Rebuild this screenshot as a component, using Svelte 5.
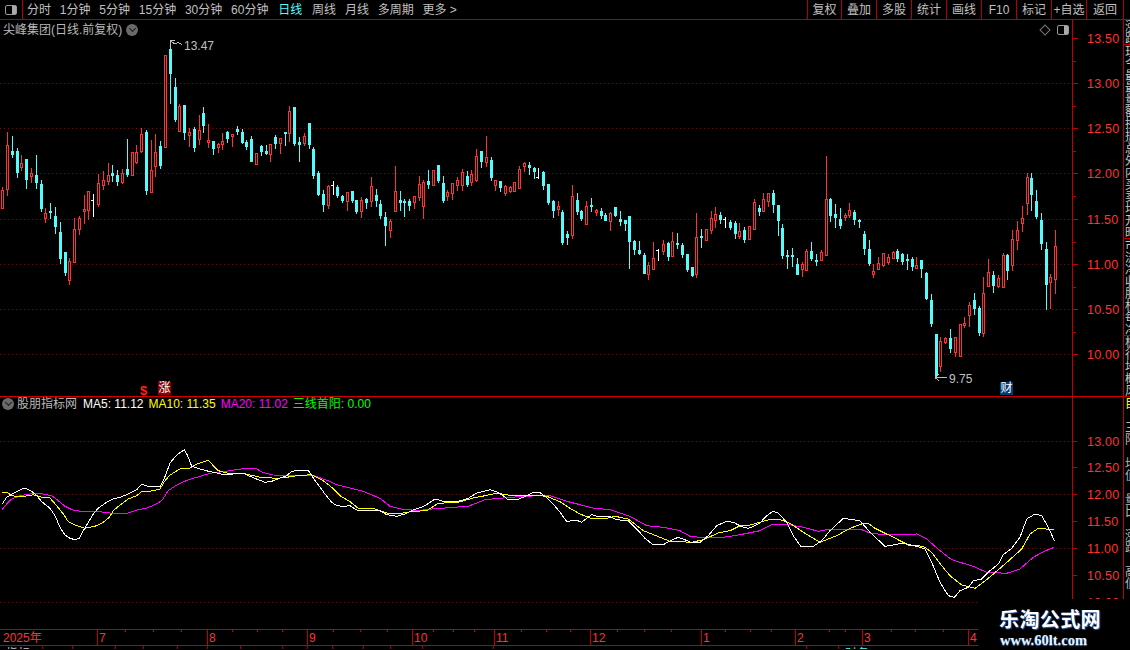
<script>
  const periods = [
    { label: "分时" }, { label: "1分钟" }, { label: "5分钟" }, { label: "15分钟" },
    { label: "30分钟" }, { label: "60分钟" }, { label: "日线", active: true },
    { label: "周线" }, { label: "月线" }, { label: "多周期" }, { label: "更多 >" },
  ];
  const actions = ["复权", "叠加", "多股", "统计", "画线", "F10", "标记", "+自选", "返回"];

  // type, high, body top, body bottom, low (screen y, read off the chart)
  const bars = [
    ["r",187,190,208,208],["r",132,145,189,195],["c",136,151,154,157],["c",148,151,172,177],["r",155,163,167,170],
    ["c",159,159,179,188],["r",168,173,176,182],["c",155,175,182,188],["c",180,184,208,211],["r",208,213,218,222],
    ["c",203,211,212,218],["c",207,216,226,233],["c",222,232,258,263],["c",252,252,272,275],["r",258,261,280,284],
    ["r",218,229,262,262],["r",216,218,229,234],["r",195,209,211,223],["r",191,191,210,219],["w",194,200,201,216],
    ["r",174,183,204,206],["r",171,180,185,189],["r",163,175,181,184],["c",165,173,175,181],["c",170,175,181,185],
    ["r",169,173,182,183],["c",139,169,174,176],["r",152,152,175,175],["r",145,152,162,163],["r",128,134,151,152],
    ["c",130,132,190,194],["r",140,170,192,192],["r",134,152,166,176],["c",141,146,165,168],["r",55,55,147,147],
    ["c",40,49,73,103],["c",78,87,119,121],["r",104,106,131,131],["c",105,105,132,139],["r",128,132,135,146],
    ["c",127,129,147,151],["r",115,130,139,144],["c",107,113,125,132],["r",124,140,142,147],["c",141,141,148,154],
    ["r",143,144,147,152],["r",133,141,144,149],["c",131,132,138,142],["r",134,134,136,146],["c",126,129,131,134],
    ["c",129,132,142,143],["c",140,142,146,149],["c",136,139,161,161],["r",153,153,164,164],["c",145,146,151,155],
    ["c",145,151,153,154],["r",144,144,154,161],["c",135,137,143,148],["r",138,138,143,153],["c",132,132,133,145],
    ["r",106,111,133,141],["c",107,107,143,145],["c",137,142,144,161],["r",133,136,143,145],["c",123,123,144,148],
    ["c",147,149,175,178],["c",171,173,194,195],["c",190,194,204,211],["r",185,186,205,208],["w",181,185,186,194],
    ["c",185,187,195,197],["c",195,196,200,202],["r",192,192,201,210],["c",191,191,200,202],["c",200,200,211,213],
    ["r",197,200,211,217],["c",198,199,202,208],["r",177,186,201,206],["c",189,195,200,206],["c",200,204,215,218],
    ["c",212,217,225,245],["r",219,221,230,237],["r",166,191,211,211],["c",191,200,202,210],["c",199,201,202,216],
    ["c",199,201,205,210],["r",196,196,202,208],["r",176,184,197,200],["r",180,182,206,218],["c",170,181,184,188],
    ["r",170,170,185,185],["c",165,165,180,182],["c",176,183,200,202],["r",190,192,196,200],["r",183,183,193,199],
    ["r",177,180,185,190],["r",169,172,185,190],["c",171,176,184,186],["r",170,174,182,185],["r",149,156,180,181],
    ["c",151,151,161,167],["r",136,157,162,166],["c",157,160,177,180],["r",180,180,185,190],["c",181,181,187,191],
    ["r",185,186,193,195],["r",186,187,191,192],["r",182,182,191,191],["r",166,169,188,188],["r",162,163,166,171],
    ["c",162,165,167,174],["c",167,168,171,178],["w",168,177,178,178],["c",171,172,185,189],["c",184,184,202,204],
    ["c",200,201,210,217],["r",201,206,209,215],["c",210,212,242,244],["c",231,234,237,244],["r",185,196,235,238],
    ["c",193,200,211,214],["c",210,211,218,220],["r",201,206,224,224],["c",198,205,206,211],["r",209,210,212,215],
    ["c",208,211,215,218],["c",213,215,220,220],["r",212,213,221,230],["c",207,207,215,216],["c",211,219,221,225],
    ["c",220,220,223,230],["c",216,216,241,268],["c",240,241,249,254],["c",241,250,253,254],["c",253,255,273,273],
    ["r",262,265,274,279],["r",242,258,269,269],["w",249,250,251,260],["r",240,244,251,254],["c",242,243,256,260],
    ["r",232,241,256,256],["c",233,243,244,248],["c",243,245,254,257],["c",254,254,269,271],["c",267,267,275,276],
    ["r",213,237,274,277],["c",229,236,237,247],["r",229,229,240,240],["r",211,218,230,233],["r",207,214,220,227],
    ["c",212,215,219,223],["w",217,219,220,227],["c",220,222,227,229],["c",221,223,233,238],["r",223,231,236,238],
    ["c",227,230,239,242],["r",226,226,239,239],["r",199,202,229,229],["c",205,208,211,215],["r",193,199,211,211],
    ["r",193,193,201,206],["c",190,193,204,212],["c",205,205,220,235],["c",224,228,255,258],["c",250,255,256,268],
    ["c",248,255,256,266],["c",258,264,274,274],["r",262,264,269,276],["r",249,251,270,270],["c",242,251,258,260],
    ["c",254,260,261,265],["r",250,252,260,260],["r",156,199,255,255],["c",198,199,215,221],["c",204,214,217,227],
    ["c",208,219,225,228],["r",213,215,217,220],["r",203,210,215,217],["c",210,212,219,224],["c",219,220,221,227],
    ["c",231,234,248,254],["c",240,249,263,265],["r",264,271,274,277],["r",257,263,269,269],["r",253,253,265,266],
    ["r",254,257,262,264],["r",251,252,258,258],["c",249,251,258,261],["c",253,254,261,264],["c",254,259,260,269],
    ["c",257,259,266,270],["r",257,265,268,268],["c",260,260,268,277],["c",272,273,298,299],["c",294,300,323,326],
    ["c",334,334,375,378],["r",337,341,366,371],["r",337,338,342,343],["c",329,338,348,352],["r",337,337,352,356],
    ["r",324,324,356,356],["r",317,323,325,327],["r",302,305,315,326],["c",293,300,308,314],["c",306,308,332,335],
    ["r",277,293,333,336],["r",259,272,286,286],["c",271,275,285,292],["r",275,278,286,287],["r",253,255,287,287],
    ["c",254,255,270,279],["r",230,239,265,270],["r",221,230,240,249],["r",206,218,223,231],["r",173,177,203,214],
    ["c",173,178,194,210],["c",190,201,216,218],["c",213,220,243,249],["c",242,249,284,309],["r",274,277,282,308],
    ["r",230,246,279,293],
  ];
  const candles = bars.map(([type, hi, top, bot, lo], i) => ({
    type, hi, top, bot, lo, x: Math.round(2.33 + 4.786 * i),
  }));

  const priceTicks = [13.5, 13, 12.5, 12, 11.5, 11, 10.5, 10].map((v, i) => ({
    label: v.toFixed(2), y: Math.round(37.5 + 45.25 * i),
  }));
  const minorTicks = priceTicks.slice(0, 7).map((t) => t.y + 23);

  const indTicks = [13, 12.5, 12, 11.5, 11, 10.5, 10].map((v, i) => ({
    label: v.toFixed(2), y: Math.round(441.5 + 26.9 * i), grid: i % 2 === 0,
  }));

  // averages, traced in pieces at 3x
  const trace = (pieces) =>
    pieces
      .map(([x0, y0, p]) => {
        const out = [];
        for (let i = 0; i < p.length; i += 2) out.push(`${(x0 + p[i] / 3).toFixed(1)},${(y0 + p[i + 1] / 3).toFixed(1)}`);
        return out.join(" ");
      })
      .join(" ");

  const ma5 = trace([
    [0, 450, [6,166,20,145,35,136,50,128,65,120,78,118,95,127,110,140,125,158,150,178,165,200,180,235,195,258,210,268,225,272,238,268,250,245,265,220,280,195,295,177,320,160,340,150,360,145,385,135,410,122,425,106,440,111,480,113,490,95,500,70,510,42,530,18,553,2,562,18,575,52,600,60,630,68,650,72,675,78,700,75,730,73,750,82,775,92,795,100,815,97,840,87,860,80,875,67,900,64,925,64,935,80,955,108,975,135,995,160,1010,170,1030,172,1050,170,1070,183,1140,185]],
    [380, 470, [20,137,50,142,75,135,100,122,130,113,150,100,165,90,190,97,235,97,265,88,290,72,330,62,350,68,370,80,385,93,410,92,430,85,455,72,480,71,495,82,520,105,540,130,560,157,590,154,605,160,620,148,635,137,650,142,690,143,710,152,745,155,770,180,795,208,820,228,850,227,875,213,895,205,915,212,935,222,960,220,985,200,1010,170,1040,157,1060,160,1085,173,1105,178,1125,170,1140,162]],
    [760, 490, [15,85,38,67,55,72,80,100,100,140,122,172,160,172,185,155,210,125,250,88,300,95,330,130,375,172,400,168,430,162,470,172,495,180,515,220,540,280,565,320,583,325,600,305,625,295,640,275,665,270,690,245,715,225,730,197,755,178,780,145,800,90,825,75,845,80,865,115,883,155]],
  ]);
  const ma10 = trace([
    [0, 450, [6,130,22,130,35,140,60,143,85,140,100,137,125,145,150,147,170,170,190,195,205,218,225,228,255,238,285,232,310,220,328,205,340,185,360,168,385,150,410,140,425,128,450,127,480,120,495,95,510,78,540,60,570,57,590,45,625,34,640,50,655,65,680,72,730,73,780,85,830,88,860,85,890,80,935,77,965,92,995,115,1020,140,1050,158,1075,178,1100,178,1125,180,1140,185]],
    [380, 470, [25,133,65,133,100,127,140,125,175,103,235,100,280,87,315,80,350,73,385,78,450,78,500,82,540,98,570,118,600,135,630,147,670,150,705,142,745,150,790,185,840,205,870,217,900,218,935,220,970,212,1015,192,1050,185,1085,168,1110,168,1140,160]],
    [760, 490, [30,91,60,92,90,103,130,130,180,160,230,140,270,118,310,103,325,103,345,118,400,145,445,168,490,172,515,190,545,230,570,260,605,288,645,298,680,272,735,225,785,180,810,135,835,118,883,122]],
  ]);
  const ma20 = trace([
    [0, 450, [6,182,20,165,35,150,60,140,90,135,125,134,155,140,175,155,195,172,220,184,245,187,290,187,330,192,385,192,415,182,440,177,465,167,485,155,505,125,530,108,565,92,590,85,630,73,690,65,735,58,770,60,790,71,820,78,860,80,935,78,985,95,1010,107,1050,117,1090,127,1140,148]],
    [380, 470, [30,112,70,122,120,124,165,119,265,112,315,92,390,85,470,80,510,80,560,97,640,117,690,122,750,142,800,170,850,175,900,185,930,202,960,205,1030,205,1080,197,1140,185]],
    [760, 490, [40,105,75,105,130,115,175,127,210,120,300,120,330,132,370,137,470,135,500,150,540,185,575,212,640,232,680,250,740,253,780,240,820,205,850,188,883,175]],
  ]);

  const months = [
    { x: 97, label: "7" }, { x: 207, label: "8" }, { x: 307, label: "9" }, { x: 412, label: "10" },
    { x: 494, label: "11" }, { x: 590, label: "12" }, { x: 701, label: "1" }, { x: 795, label: "2" },
    { x: 862, label: "3" }, { x: 968, label: "4" },
  ];
  const dayTicks = [125,153,181,232,257,282,333,360,387,433,453,474,521,546,570,617,644,671,725,750,771,829,845,891,915,943];

  const tabs = [
    { w: 43, label: "指标" }, { w: 30, label: "" }, { w: 43, label: "" }, { w: 28, label: "" },
    { w: 34, label: "" }, { w: 30, label: "" }, { w: 33, label: "" }, { w: 42, label: "" },
    { w: 25, label: "" }, { w: 25, label: "" }, { w: 31, label: "" }, { w: 27, label: "" },
    { w: 32, label: "" }, { w: 71, label: "" }, { w: 313, label: "" }, { w: 32, label: "" },
    { w: 100, label: "财务", cyan: true },
  ];

  const sideGroups = [
    { h: 25, rows: ["涨", "跌"] },
    { h: 97, rows: ["现", "今", "最", "最", "量", "额", "换", "振"] },
    { h: 97, rows: ["总", "外", "内", "买", "卖", "均", "开", "昨"] },
    { h: 97, rows: ["市", "流", "净", "收", "股", "权", "每", "净"] },
    { h: 61, rows: ["板", "行", "地", "概", "风"] },
    { h: 202, yellow: true, rows: ["目", "", "三", "阳", "", "均", "值", "", "量", "比", "", "涨", "跌", "", "高", "低"] },
  ];
</script>

<div class="terminal">
  <header class="toolbar">
    <div class="panel-toggle"><span class="toggle-icon"></span></div>
    <nav class="periods">
      {#each periods as p}
        <span class:active={p.active}>{p.label}</span>
      {/each}
    </nav>
    <div class="actions">
      {#each actions as a}
        <button type="button">{a}</button>
      {/each}
    </div>
  </header>

  <div class="workspace">
    <div class="charts">
      <section class="pane price-pane">
        <div class="plot">
          <div class="title-row">
            <span>尖峰集团(日线.前复权)</span>
            <span class="chevron"></span>
            <span class="spacer"></span>
            <span class="diamond"></span>
            <span class="toggle-icon"></span>
          </div>
          <svg viewBox="0 20 1072 376" width="1072" height="376" shape-rendering="crispEdges">
            <defs>
              <pattern id="price-dots" width="4" height="1" patternUnits="userSpaceOnUse">
                <rect width="1" height="1" fill="#860000" />
              </pattern>
            </defs>
            {#each priceTicks.slice(1) as t}
              <rect x="0" y={t.y} width="1072" height="1" fill="url(#price-dots)" />
            {/each}
            {#each candles as c}
              {#if c.type === "r"}
                <rect class="up" x={c.x} y={c.hi} width="1" height={c.top - c.hi} />
                <rect class="up" x={c.x} y={c.bot} width="1" height={c.lo - c.bot + 1} />
                <rect class="hollow" x={c.x - 0.5} y={c.top + 0.5} width="2" height={c.bot - c.top} />
              {:else if c.type === "c"}
                <rect class="down" x={c.x} y={c.hi} width="1" height={c.lo - c.hi + 1} />
                <rect class="down" x={c.x - 1} y={c.top} width="3" height={c.bot - c.top + 1} />
              {:else}
                <rect class="flat" x={c.x} y={c.hi} width="1" height={c.lo - c.hi + 1} />
                <rect class="flat" x={c.x - 2} y={c.top} width="2" height="1" />
              {/if}
            {/each}
            <path class="note" d="M170.5 48V40.5H175M171.5 41.5L175 44L178 42.5L182 44.5" />
            <text class="note-text" x="184" y="50">13.47</text>
            <path class="note" d="M935 377.5H947M935 377.5L939 374.5M935 377.5L939 380.5" />
            <text class="note-text" x="949" y="383">9.75</text>
          </svg>
          <span class="dollar">$</span>
          <span class="tag rise">涨</span>
          <span class="tag report">财</span>
        </div>
        <svg class="axis" viewBox="1073 20 50 376" width="50" height="376" shape-rendering="crispEdges">
          {#each priceTicks as t}
            <line class="tick" x1="1073" x2="1078" y1={t.y + 0.5} y2={t.y + 0.5} />
            <text class="axis-label" x="1087" y={t.y + 5}>{t.label}</text>
          {/each}
          {#each minorTicks as y}
            <line class="tick" x1="1073" x2="1076" y1={y + 0.5} y2={y + 0.5} />
          {/each}
        </svg>
      </section>

      <section class="pane ind-pane">
        <div class="plot">
          <div class="ind-head">
            <span class="chevron"></span>
            <span class="ind-name">股朋指标网</span>
            <span class="c-white">MA5: 11.12</span>
            <span class="c-yellow">MA10: 11.35</span>
            <span class="c-magenta">MA20: 11.02</span>
            <span class="c-green">三线首阳: 0.00</span>
          </div>
          <svg viewBox="0 398 1072 232" width="1072" height="232" shape-rendering="crispEdges">
            <defs>
              <pattern id="ind-dots" width="4" height="1" patternUnits="userSpaceOnUse">
                <rect width="1" height="1" fill="#860000" />
              </pattern>
            </defs>
            {#each indTicks.filter((t) => t.grid) as t}
              <rect x="0" y={t.y} width="1072" height="1" fill="url(#ind-dots)" />
            {/each}
            <polyline class="ma magenta" points={ma20} />
            <polyline class="ma yellow" points={ma10} />
            <polyline class="ma white" points={ma5} />
          </svg>
        </div>
        <svg class="axis" viewBox="1073 398 50 232" width="50" height="232" shape-rendering="crispEdges">
          {#each indTicks as t}
            <line class="tick" x1="1073" x2="1077" y1={t.y + 0.5} y2={t.y + 0.5} />
            <text class="axis-label" x="1087" y={t.y + 5}>{t.label}</text>
          {/each}
        </svg>
      </section>

      <svg class="dates" viewBox="0 631 1123 15" width="1123" height="17" shape-rendering="crispEdges">
        <text class="date-label" x="3" y="643">2025年</text>
        {#each dayTicks as x}
          <line class="tick" x1={x + 0.5} x2={x + 0.5} y1="631" y2="633" />
        {/each}
        {#each months as m}
          <line class="tick" x1={m.x + 0.5} x2={m.x + 0.5} y1="631" y2="646" />
          <text class="date-label" x={m.x + 2} y="643">{m.label}</text>
        {/each}
      </svg>

      <div class="tabs">
        {#each tabs as t}
          <span class:cyan={t.cyan} style="width: {t.w}px">{t.label}</span>
        {/each}
      </div>
    </div>

    <aside class="side">
      {#each sideGroups as g}
        <div class="side-group" class:yellow={g.yellow} style="height: {g.h}px">
          {#each g.rows as r}
            <span>{r}</span>
          {/each}
        </div>
      {/each}
    </aside>
  </div>

  <div class="watermark">
    <strong>乐淘公式网</strong>
    <em>www.60lt.com</em>
  </div>
</div>

<style>
  :global(body) {
    background: #000;
  }
  .terminal {
    position: relative;
    width: 1130px;
    height: 650px;
    overflow: hidden;
    background: #000;
    color: #c0c0c0;
    font: 12px/1 "Liberation Sans", "Noto Sans CJK SC", sans-serif;
  }

  .toolbar {
    display: flex;
    height: 19px;
    align-items: center;
    border-bottom: 1px solid #b00000;
  }
  .panel-toggle {
    display: flex;
    width: 23px;
    height: 100%;
    padding-left: 5px;
    box-sizing: border-box;
    align-items: center;
    border-right: 1px solid #b00000;
  }
  .toggle-icon {
    display: block;
    width: 10px;
    height: 8px;
    flex: none;
    border: 1px solid #999;
    border-radius: 2px;
    background: linear-gradient(to right, #000 60%, #aaa 60%);
  }
  .periods {
    display: flex;
    gap: 8.8px;
    margin-left: 4px;
    white-space: nowrap;
  }
  .periods .active {
    margin-left: 1px;
    margin-right: 1px;
    color: #54fcfc;
  }
  .actions {
    display: flex;
    height: 100%;
    margin-left: auto;
    margin-right: 6px;
    border-right: 1px solid #b00000;
  }
  .actions button {
    width: 35px;
    padding: 0;
    border: 0;
    border-left: 1px solid #b00000;
    background: none;
    color: inherit;
    font: inherit;
    white-space: nowrap;
  }
  .actions button:first-child {
    width: 34px;
  }
  .actions button:last-child {
    width: 37px;
  }

  .workspace {
    display: flex;
    height: 630px;
  }
  .charts {
    width: 1123px;
    flex: none;
  }
  .pane {
    display: flex;
  }
  .price-pane {
    border-bottom: 1px solid #d00000;
  }
  .plot {
    position: relative;
    width: 1072px;
    flex: none;
  }
  .plot svg,
  .axis,
  .dates {
    display: block;
  }
  .axis {
    flex: none;
    border-left: 1px solid #c00000;
  }

  .title-row {
    position: absolute;
    top: 3px;
    left: 3px;
    right: 3px;
    display: flex;
    height: 14px;
    align-items: center;
    gap: 4px;
    color: #b8b8b8;
  }
  .spacer {
    flex: 1;
  }
  .diamond {
    width: 6px;
    height: 6px;
    margin-right: 4px;
    border: 1px solid #777;
    transform: rotate(45deg);
  }
  .chevron {
    position: relative;
    width: 12px;
    height: 12px;
    flex: none;
    border-radius: 50%;
    background: #6a6a6a;
  }
  .chevron::after {
    content: "";
    position: absolute;
    top: 2px;
    left: 3.5px;
    width: 4px;
    height: 4px;
    border-right: 1.5px solid #1c1c1c;
    border-bottom: 1.5px solid #1c1c1c;
    transform: rotate(45deg);
  }

  .up {
    fill: #ff3232;
  }
  .hollow {
    fill: #000;
    stroke: #ff3232;
  }
  .down {
    fill: #54fcfc;
  }
  .flat {
    fill: #fff;
  }
  .note {
    fill: none;
    stroke: #c0c0c0;
  }
  .note-text {
    fill: #c0c0c0;
    font-size: 12px;
  }
  .tick {
    stroke: #c00000;
  }
  .axis-label {
    fill: #ff3232;
    font-size: 12.5px;
    letter-spacing: 0.2px;
  }

  .dollar {
    position: absolute;
    top: 364px;
    left: 140px;
    color: #ff2020;
    font-size: 13px;
    font-weight: bold;
  }
  .tag {
    position: absolute;
    top: 362px;
    display: block;
    width: 13px;
    height: 13px;
    color: #fff;
    line-height: 13px;
    text-align: center;
  }
  .rise {
    left: 158px;
    background: #8b0000;
  }
  .report {
    left: 1000px;
    background: #003c78;
  }

  .ind-head {
    position: absolute;
    top: 0;
    left: 2px;
    display: flex;
    height: 14px;
    align-items: center;
    gap: 5px;
    white-space: nowrap;
  }
  .ind-name {
    margin-left: -2px;
    margin-right: 1px;
    color: #b8b8b8;
  }
  .c-white {
    color: #fff;
  }
  .c-yellow {
    color: #ffff00;
  }
  .c-magenta {
    color: #ff00ff;
  }
  .c-green {
    color: #00ff00;
  }
  .ma {
    fill: none;
    stroke-width: 1;
  }
  .magenta {
    stroke: #ff00ff;
  }
  .yellow {
    stroke: #ffff00;
  }
  .white {
    stroke: #fff;
  }

  .dates {
    border-top: 1px solid #c00000;
    border-bottom: 1px solid #c00000;
    box-sizing: border-box;
  }
  .date-label {
    fill: #ff3232;
    font-size: 12px;
  }

  .tabs {
    display: flex;
    height: 3px;
    overflow: hidden;
  }
  .tabs span {
    box-sizing: border-box;
    flex: none;
    height: 14px;
    padding: 2px 0 0 6px;
    border-right: 1px solid #a00000;
    color: #d0d0d0;
    white-space: nowrap;
    overflow: hidden;
  }
  .tabs span.cyan {
    border-right: 0;
    color: #54fcfc;
  }

  .side {
    width: 7px;
    border-left: 1px solid #c00000;
    overflow: hidden;
  }
  .side-group {
    display: flex;
    box-sizing: border-box;
    flex-direction: column;
    padding: 1px 0 0 1px;
    border-bottom: 1px solid #c00000;
    color: #c8c8c8;
    overflow: hidden;
  }
  .side-group span {
    height: 12px;
    flex: none;
    white-space: nowrap;
  }
  .side-group.yellow {
    border-bottom: 0;
    color: #b8b8b8;
  }
  .side-group.yellow span:first-child {
    color: #ffff00;
  }

  .watermark {
    position: absolute;
    left: 978px;
    top: 599px;
    right: 0;
    bottom: 0;
    display: flex;
    flex-direction: column;
    align-items: flex-start;
    padding: 9px 0 0 21px;
    background: #000;
  }
  .watermark strong {
    color: #fff;
    font: bold 20px/22px "Noto Sans CJK SC", sans-serif;
    letter-spacing: 0.4px;
    text-shadow: 1px 1px 1px #2a5fa8;
  }
  .watermark em {
    margin-top: 1px;
    margin-left: 1px;
    color: #e6f3ff;
    font: bold 14.5px/18px "Liberation Serif", serif;
    text-shadow: 0 1px 1px #2a7fd8;
  }
</style>
